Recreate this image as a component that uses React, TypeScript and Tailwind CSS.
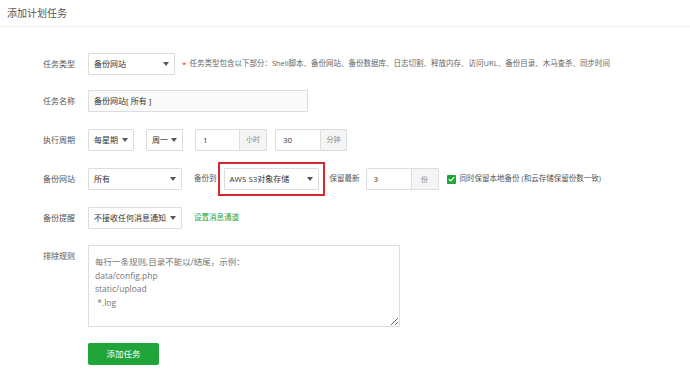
import type { ReactNode } from "react";

function Arrow() {
  return (
    <svg width="6" height="4" viewBox="0 0 6 4" className="shrink-0">
      <path d="M0 0h6L3 4z" fill="#555" />
    </svg>
  );
}

function Select({ text, className }: { text: string; className: string }) {
  return (
    <div
      className={`flex h-[22px] items-center justify-between rounded-[1px] border border-[#ddd] bg-white pr-[5px] pl-[5px] text-[8px] leading-none text-[#333] ${className}`}
    >
      <span className="whitespace-nowrap">{text}</span>
      <Arrow />
    </div>
  );
}

function AddonInput({ value, unit, inputW, unitW }: { value: string; unit: string; inputW: string; unitW: string }) {
  return (
    <div className="flex h-[22px] rounded-[1px] border border-[#ddd]">
      <div className={`flex items-center bg-white pl-[7px] text-[8px] leading-none text-[#333] ${inputW}`}>{value}</div>
      <div className={`flex items-center justify-center border-l border-[#ddd] bg-[#f5f5f5] text-[7px] leading-none text-[#888] ${unitW}`}>
        {unit}
      </div>
    </div>
  );
}

function Row({ label, children, className }: { label: string; children: ReactNode; className: string }) {
  return (
    <div className={`flex ${className}`}>
      <div className="w-[75px] shrink-0 text-right text-[8px] leading-none text-[#555]">{label}</div>
      <div className="ml-[13px] flex items-center">{children}</div>
    </div>
  );
}

export default function App() {
  return (
    <div className="h-[376px] w-full overflow-hidden bg-white font-['Open_Sans','Noto_Sans_CJK_SC',sans-serif]">
      <div className="flex h-[27px] items-center border-b border-[#eee] pl-[7px] text-[10px] leading-none text-[#555]">
        添加计划任务
      </div>

      <div className="pt-[26px]">
        <Row label="任务类型" className="h-[22px] items-center">
          <Select text="备份网站" className="w-[87px]" />
          <span className="ml-[7px] text-[8px] leading-none text-[#e33]">*</span>
          <span className="ml-[3px] whitespace-nowrap text-[7.5px] leading-none text-[#666]">
            任务类型包含以下部分：Shell脚本、备份网站、备份数据库、日志切割、释放内存、访问URL、备份目录、木马查杀、同步时间
          </span>
        </Row>

        <Row label="任务名称" className="mt-[15px] h-[22px] items-center">
          <div className="flex h-[22px] w-[220px] items-center border border-[#ddd] bg-[#fafafa] pl-[5px] text-[8px] leading-none text-[#333]">
            备份网站[ 所有 ]
          </div>
        </Row>

        <Row label="执行周期" className="mt-[17px] h-[21px] items-center">
          <Select text="每星期" className="w-[46px]" />
          <Select text="周一" className="ml-[12px] w-[37px]" />
          <div className="ml-[12px]">
            <AddonInput value="1" unit="小时" inputW="w-[43px]" unitW="w-[27px]" />
          </div>
          <div className="ml-[8px]">
            <AddonInput value="30" unit="分钟" inputW="w-[44px]" unitW="w-[26px]" />
          </div>
        </Row>

        <Row label="备份网站" className="mt-[12px] h-[34px] items-center">
          <Select text="所有" className="w-[94px]" />
          <span className="ml-[12px] text-[7.5px] leading-none text-[#555]">备份到</span>
          <div className="ml-[1px] border-2 border-[#d9272e] p-[4px]">
            <Select text="AWS S3对象存储" className="w-[95px]" />
          </div>
          <span className="ml-[5px] text-[7.5px] leading-none text-[#555]">保留最新</span>
          <div className="ml-[6px]">
            <AddonInput value="3" unit="份" inputW="w-[44px]" unitW="w-[27px]" />
          </div>
          <div className="ml-[8px] flex h-[9px] w-[9px] items-center justify-center rounded-[1px] bg-[#20a53a]">
            <svg width="7" height="6" viewBox="0 0 7 6">
              <path d="M0.8 3.1 2.7 4.9 6.2 1.1" fill="none" stroke="#fff" strokeWidth="1.2" />
            </svg>
          </div>
          <span className="ml-[4px] whitespace-nowrap text-[7.5px] leading-none text-[#555]">
            同时保留本地备份 (和云存储保留份数一致)
          </span>
        </Row>

        <Row label="备份提醒" className="mt-[11px] h-[22px] items-center">
          <Select text="不接收任何消息通知" className="w-[94px]" />
          <span className="ml-[12px] text-[7.5px] leading-none text-[#20a53a]">设置消息通道</span>
        </Row>

        <Row label="排除规则" className="mt-[16px] items-start [&>div:first-child]:pt-[7px]">
          <textarea
            className="h-[82px] w-[312px] resize border border-[#ddd] bg-white px-[6px] py-[9px] text-[8.5px] leading-[13.7px] text-[#333] outline-none placeholder:text-[#777]"
            placeholder={"每行一条规则,目录不能以/结尾，示例：\ndata/config.php\nstatic/upload\n *.log"}
          />
        </Row>

        <div className="mt-[16px] pl-[88px]">
          <button className="flex h-[22px] w-[71px] items-center justify-center rounded-[2px] bg-[#20a53a] text-[8.5px] leading-none text-white">
            添加任务
          </button>
        </div>
      </div>
    </div>
  );
}
